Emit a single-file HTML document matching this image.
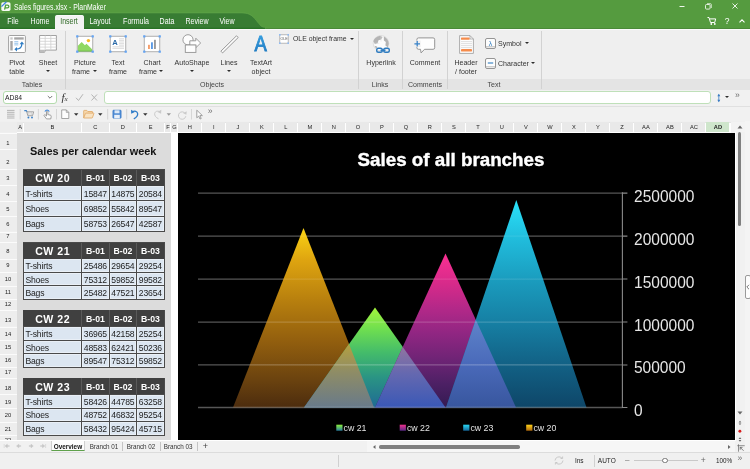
<!DOCTYPE html>
<html lang="en"><head><meta charset="utf-8"><title>Sales figures.xlsx - PlanMaker</title>
<style>
html,body{margin:0;padding:0}
body{width:750px;height:469px;overflow:hidden;position:relative;background:#f0f0f0;font-family:"Liberation Sans",sans-serif;}
#app{position:absolute;left:0;top:0;width:750px;height:469px;overflow:hidden}
#app div,#app svg,#app .t,#app i.dd{position:absolute}
.t{white-space:nowrap;line-height:1;display:block}
i.dd{width:0;height:0;border-left:2.500px solid transparent;border-right:2.500px solid transparent;border-top:2.800px solid #2c2c2c}
svg{overflow:visible}
</style></head><body><div id="app">
<div style="left:0px;top:0px;width:750px;height:28.8px;background:#559b3f"></div>
<svg style="left:0px;top:12px;" width="280" height="17" viewBox="0 12 280 17"><path d="M0 12.900H242C251 12.900 254 17.500 257.500 22S263.500 28.800 270 28.800H0z" fill="#387c33"/><path d="M0 12.900H242C251 12.900 254 17.500 257.500 22S263.500 28.500 269 28.600" fill="none" stroke="#63a84c" stroke-width="0.600"/><path d="M0 28.200H265" stroke="#226c20" stroke-width="1.100"/></svg>
<div style="left:266px;top:27.8px;width:484px;height:1px;background:#4a8a38"></div>
<div style="left:0px;top:28.8px;width:750px;height:0.9px;background:#fbfbfb"></div>
<svg style="left:1px;top:2px;" width="10" height="9" viewBox="0 0 10 9"><rect x="0.300" y="0.200" width="9.200" height="8.700" rx="1.600" fill="#f6faf3"/><path d="M3.600 7.600l1-4.400h1.900a1.300 1.300 0 0 1 0 2.700h-2.200" fill="none" stroke="#4ea23a" stroke-width="1.300"/><path d="M0.500 4.600L5.400 -0.200" stroke="#3f80e0" stroke-width="1.300"/></svg>
<span class="t" style="left:14.1px;text-align:left;top:3.8px;font-size:8.2px;color:#fff;font-weight:normal;transform:translateY(0px) scaleX(0.835);transform-origin:0 50%;">Sales figures.xlsx - PlanMaker</span>
<div style="left:55.2px;top:15.2px;width:28.6px;height:14.5px;background:#f3f3f3;border-radius:2.500px 2.500px 0 0;box-shadow:inset 0 0.600px 0 #fff"></div>
<span class="t" style="left:-107.2px;width:240px;text-align:center;top:18.2px;font-size:8.2px;color:#fff;font-weight:normal;transform:translateY(0px) scaleX(0.86);transform-origin:50% 50%;">File</span>
<span class="t" style="left:-80.4px;width:240px;text-align:center;top:18.2px;font-size:8.2px;color:#fff;font-weight:normal;transform:translateY(0px) scaleX(0.86);transform-origin:50% 50%;">Home</span>
<span class="t" style="left:-50.6px;width:240px;text-align:center;top:18.2px;font-size:8.2px;color:#2f6a26;font-weight:normal;transform:translateY(0px) scaleX(0.86);transform-origin:50% 50%;">Insert</span>
<span class="t" style="left:-19.8px;width:240px;text-align:center;top:18.2px;font-size:8.2px;color:#fff;font-weight:normal;transform:translateY(0px) scaleX(0.86);transform-origin:50% 50%;">Layout</span>
<span class="t" style="left:15.5px;width:240px;text-align:center;top:18.2px;font-size:8.2px;color:#fff;font-weight:normal;transform:translateY(0px) scaleX(0.86);transform-origin:50% 50%;">Formula</span>
<span class="t" style="left:47.0px;width:240px;text-align:center;top:18.2px;font-size:8.2px;color:#fff;font-weight:normal;transform:translateY(0px) scaleX(0.86);transform-origin:50% 50%;">Data</span>
<span class="t" style="left:76.7px;width:240px;text-align:center;top:18.2px;font-size:8.2px;color:#fff;font-weight:normal;transform:translateY(0px) scaleX(0.86);transform-origin:50% 50%;">Review</span>
<span class="t" style="left:106.5px;width:240px;text-align:center;top:18.2px;font-size:8.2px;color:#fff;font-weight:normal;transform:translateY(0px) scaleX(0.86);transform-origin:50% 50%;">View</span>
<svg style="left:676px;top:2px;" width="74" height="24" viewBox="0 0 74 24">
<path d="M3.5 4.5h5" stroke="#eef6eb" stroke-width="1"/>
<rect x="29.5" y="2.500" width="4.600" height="4.600" rx="1" fill="none" stroke="#eef6eb" stroke-width="0.900"/>
<path d="M31 1.700h3.500a0.800 0.800 0 0 1 0.800 0.800v3.500" fill="none" stroke="#eef6eb" stroke-width="0.800"/>
<path d="M56.5 1.500l5 5M61.500 1.500l-5 5" stroke="#eef6eb" stroke-width="0.950"/>
<path d="M31.5 15.5h1.5l1.5 5h4.2l1-3.6h-6" fill="none" stroke="#fff" stroke-width="1"/>
<circle cx="35.300" cy="22" r="0.9" fill="#fff"/><circle cx="38.800" cy="22" r="0.9" fill="#fff"/>
<path d="M63.500 20.300l2.500-2.500 2.500 2.500" fill="none" stroke="#fff" stroke-width="1.100"/>
</svg>
<span class="t" style="left:607.0px;width:240px;text-align:center;top:16.75px;font-size:8.5px;color:#fff;font-weight:normal;">?</span>
<div style="left:0px;top:29.7px;width:750px;height:60.3px;background:#efefef"></div>
<div style="left:0px;top:79px;width:750px;height:10.7px;background:#e4e4e4"></div>
<div style="left:0px;top:89.7px;width:750px;height:0.8px;background:#dcdcdc"></div>
<div style="left:65.3px;top:31px;width:1px;height:58px;background:#d2d2d2"></div>
<div style="left:358.3px;top:31px;width:1px;height:58px;background:#d2d2d2"></div>
<div style="left:402.1px;top:31px;width:1px;height:58px;background:#d2d2d2"></div>
<div style="left:447px;top:31px;width:1px;height:58px;background:#d2d2d2"></div>
<div style="left:540.7px;top:31px;width:1px;height:58px;background:#d2d2d2"></div>
<span class="t" style="left:-103.0px;width:240px;text-align:center;top:58.9px;font-size:8.0px;color:#333;font-weight:normal;transform:translateY(-0.45px) scaleX(0.88);transform-origin:50% 50%;">Pivot</span>
<span class="t" style="left:-103.0px;width:240px;text-align:center;top:68.4px;font-size:8.0px;color:#333;font-weight:normal;transform:translateY(-0.45px) scaleX(0.88);transform-origin:50% 50%;">table</span>
<span class="t" style="left:-72.5px;width:240px;text-align:center;top:58.9px;font-size:8.0px;color:#333;font-weight:normal;transform:translateY(-0.45px) scaleX(0.88);transform-origin:50% 50%;">Sheet</span>
<i class="dd" style="left:45.5px;top:70px"></i>
<span class="t" style="left:-34.7px;width:240px;text-align:center;top:58.9px;font-size:8.0px;color:#333;font-weight:normal;transform:translateY(-0.45px) scaleX(0.88);transform-origin:50% 50%;">Picture</span>
<span class="t" style="left:-38.7px;width:240px;text-align:center;top:68.4px;font-size:8.0px;color:#333;font-weight:normal;transform:translateY(-0.45px) scaleX(0.88);transform-origin:50% 50%;">frame</span>
<i class="dd" style="left:92.5px;top:70.0px"></i>
<span class="t" style="left:-1.7px;width:240px;text-align:center;top:58.9px;font-size:8.0px;color:#333;font-weight:normal;transform:translateY(-0.45px) scaleX(0.88);transform-origin:50% 50%;">Text</span>
<span class="t" style="left:-1.7px;width:240px;text-align:center;top:68.4px;font-size:8.0px;color:#333;font-weight:normal;transform:translateY(-0.45px) scaleX(0.88);transform-origin:50% 50%;">frame</span>
<span class="t" style="left:31.8px;width:240px;text-align:center;top:58.9px;font-size:8.0px;color:#333;font-weight:normal;transform:translateY(-0.45px) scaleX(0.88);transform-origin:50% 50%;">Chart</span>
<span class="t" style="left:27.8px;width:240px;text-align:center;top:68.4px;font-size:8.0px;color:#333;font-weight:normal;transform:translateY(-0.45px) scaleX(0.88);transform-origin:50% 50%;">frame</span>
<i class="dd" style="left:159.0px;top:70.0px"></i>
<span class="t" style="left:71.5px;width:240px;text-align:center;top:58.9px;font-size:8.0px;color:#333;font-weight:normal;transform:translateY(-0.45px) scaleX(0.88);transform-origin:50% 50%;">AutoShape</span>
<i class="dd" style="left:189.5px;top:70px"></i>
<span class="t" style="left:109.0px;width:240px;text-align:center;top:58.9px;font-size:8.0px;color:#333;font-weight:normal;transform:translateY(-0.45px) scaleX(0.88);transform-origin:50% 50%;">Lines</span>
<i class="dd" style="left:227px;top:70px"></i>
<span class="t" style="left:140.8px;width:240px;text-align:center;top:58.9px;font-size:8.0px;color:#333;font-weight:normal;transform:translateY(-0.45px) scaleX(0.88);transform-origin:50% 50%;">TextArt</span>
<span class="t" style="left:140.8px;width:240px;text-align:center;top:68.4px;font-size:8.0px;color:#333;font-weight:normal;transform:translateY(-0.45px) scaleX(0.88);transform-origin:50% 50%;">object</span>
<span class="t" style="left:260.8px;width:240px;text-align:center;top:58.9px;font-size:8.0px;color:#333;font-weight:normal;transform:translateY(-0.45px) scaleX(0.88);transform-origin:50% 50%;">Hyperlink</span>
<span class="t" style="left:304.6px;width:240px;text-align:center;top:58.9px;font-size:8.0px;color:#333;font-weight:normal;transform:translateY(-0.45px) scaleX(0.88);transform-origin:50% 50%;">Comment</span>
<span class="t" style="left:346.0px;width:240px;text-align:center;top:58.9px;font-size:8.0px;color:#333;font-weight:normal;transform:translateY(-0.45px) scaleX(0.88);transform-origin:50% 50%;">Header</span>
<span class="t" style="left:346.0px;width:240px;text-align:center;top:68.4px;font-size:8.0px;color:#333;font-weight:normal;transform:translateY(-0.45px) scaleX(0.88);transform-origin:50% 50%;">/ footer</span>
<span class="t" style="left:-88.0px;width:240px;text-align:center;top:80.6px;font-size:8.0px;color:#444;font-weight:normal;transform:translateY(-0.45px) scaleX(0.88);transform-origin:50% 50%;">Tables</span>
<span class="t" style="left:92.0px;width:240px;text-align:center;top:80.6px;font-size:8.0px;color:#444;font-weight:normal;transform:translateY(-0.45px) scaleX(0.88);transform-origin:50% 50%;">Objects</span>
<span class="t" style="left:260.0px;width:240px;text-align:center;top:80.6px;font-size:8.0px;color:#444;font-weight:normal;transform:translateY(-0.45px) scaleX(0.88);transform-origin:50% 50%;">Links</span>
<span class="t" style="left:304.6px;width:240px;text-align:center;top:80.6px;font-size:8.0px;color:#444;font-weight:normal;transform:translateY(-0.45px) scaleX(0.88);transform-origin:50% 50%;">Comments</span>
<span class="t" style="left:374.0px;width:240px;text-align:center;top:80.6px;font-size:8.0px;color:#444;font-weight:normal;transform:translateY(-0.45px) scaleX(0.88);transform-origin:50% 50%;">Text</span>
<span class="t" style="left:292.5px;text-align:left;top:35.0px;font-size:8.0px;color:#333;font-weight:normal;transform:translateY(0px) scaleX(0.86);transform-origin:0 50%;">OLE object frame</span>
<i class="dd" style="left:350px;top:37.700px"></i>
<span class="t" style="left:497.8px;text-align:left;top:39.8px;font-size:8.0px;color:#333;font-weight:normal;transform:translateY(0px) scaleX(0.88);transform-origin:0 50%;">Symbol</span>
<i class="dd" style="left:525.1px;top:41.900px"></i>
<span class="t" style="left:497.8px;text-align:left;top:59.7px;font-size:8.0px;color:#333;font-weight:normal;transform:translateY(0px) scaleX(0.88);transform-origin:0 50%;">Character</span>
<i class="dd" style="left:531.1px;top:61.900px"></i>
<!-- Pivot table -->
<svg style="left:8px;top:35px" width="18" height="18" viewBox="0 0 18 18">
<rect x="0.600" y="0.500" width="16.800" height="17" rx="1" fill="#fff" stroke="#979797" stroke-width="0.900"/>
<rect x="2.300" y="2.300" width="2.400" height="2.300" fill="#c9c9c9"/>
<rect x="6.200" y="2.300" width="9.500" height="2.300" fill="#a6a6a6"/>
<rect x="2.300" y="6" width="2.400" height="9.500" fill="#a6a6a6"/>
<path d="M6.300 6.700h4M6.300 8.300h4M6.300 9.900h4" stroke="#8fbde8" stroke-width="0.900"/>
<path d="M8.200 14.200c4 0 5.700-1.600 5.700-5.600" fill="none" stroke="#2d7cc4" stroke-width="1.250"/>
<path d="M11.600 9.200l2.300-2.600 2.300 2.600z" fill="#2d7cc4"/>
<path d="M9 12l-2.600 2.200 2.600 2.200z" fill="#2d7cc4"/>
</svg>
<!-- Sheet -->
<svg style="left:39px;top:35px" width="18" height="18" viewBox="0 0 18 18">
<path d="M0.600 0.500h16.800v14.600h-10.800l-1.200 2.300h-4.800z" fill="#fff" stroke="#979797" stroke-width="0.900"/>
<path d="M0.600 14.700h5.600l-1 2.700h-4.600z" fill="#bdbdbd"/>
<path d="M0.600 3.400h16.800M0.600 6.300h16.800M0.600 9.200h16.800M0.600 12.100h16.800" stroke="#d0d0d0" stroke-width="0.800"/>
<path d="M6.200 0.500v14.600M11.800 0.500v14.600" stroke="#d0d0d0" stroke-width="0.800"/>
</svg>
<!-- Picture frame -->
<svg style="left:76px;top:34.800px" width="18" height="18" viewBox="0 0 18 18">
<rect x="1.300" y="1.300" width="15.400" height="15.400" fill="#fff" stroke="#b4b4b4" stroke-width="1.100"/>
<circle cx="12.400" cy="5.600" r="1.700" fill="#f7b928"/>
<path d="M1.900 16.100v-5.300l3.800-3.900 3.200 3.300 1.600-1.500 5.600 5.600v1.800z" fill="#8fd862"/>
<path d="M1.900 15.700h14.200v0.900h-14.200z" fill="#6cb64a"/>
<g fill="#63a4f4"><rect x="0.150" y="0.150" width="2.300" height="2.300" rx="0.500"/><rect x="15.550" y="0.150" width="2.300" height="2.300" rx="0.500"/><rect x="0.150" y="15.550" width="2.300" height="2.300" rx="0.500"/><rect x="15.550" y="15.550" width="2.300" height="2.300" rx="0.500"/></g>
</svg>
<!-- Text frame -->
<svg style="left:109.400px;top:34.800px" width="18" height="18" viewBox="0 0 18 18">
<rect x="1.300" y="1.300" width="15.400" height="15.400" fill="#fff" stroke="#b4b4b4" stroke-width="1.100"/>
<path d="M10 3.800h5M10 5.400h5M10 7h5M10 8.600h5M10 10.200h5M3.500 11.800h11.500M3.500 13.400h11.500" stroke="#d4d4d4" stroke-width="0.800"/>
<text x="6" y="9.800" text-anchor="middle" font-family="'Liberation Sans',sans-serif" font-weight="bold" font-size="7.600" fill="#2a6aa8">A</text>
<g fill="#63a4f4"><rect x="0.150" y="0.150" width="2.300" height="2.300" rx="0.500"/><rect x="15.550" y="0.150" width="2.300" height="2.300" rx="0.500"/><rect x="0.150" y="15.550" width="2.300" height="2.300" rx="0.500"/><rect x="15.550" y="15.550" width="2.300" height="2.300" rx="0.500"/></g>
</svg>
<!-- Chart frame -->
<svg style="left:142.800px;top:35px" width="18" height="18" viewBox="0 0 18 18">
<rect x="1.300" y="1.300" width="15.400" height="15.400" fill="#fff" stroke="#b4b4b4" stroke-width="1.100"/>
<rect x="5.100" y="9.800" width="1.700" height="4.200" fill="#f4935a"/>
<rect x="8.100" y="7.300" width="1.700" height="6.700" fill="#4a90e2"/>
<rect x="11.100" y="4.800" width="1.700" height="9.200" fill="#8f8f8f"/>
<g fill="#63a4f4"><rect x="0.150" y="0.150" width="2.300" height="2.300" rx="0.500"/><rect x="15.550" y="0.150" width="2.300" height="2.300" rx="0.500"/><rect x="0.150" y="15.550" width="2.300" height="2.300" rx="0.500"/><rect x="15.550" y="15.550" width="2.300" height="2.300" rx="0.500"/></g>
</svg>
<!-- AutoShape -->
<svg style="left:181px;top:34px" width="21" height="19" viewBox="0 0 21 19">
<circle cx="7" cy="5.800" r="5.100" fill="#fdfdfd" stroke="#939393" stroke-width="0.900"/>
<path d="M8.800 6.800h6v-2.600l4.800 4.800-4.800 4.800v-2.600h-6z" fill="#fdfdfd" stroke="#939393" stroke-width="0.900" stroke-linejoin="round"/>
<rect x="4.300" y="11" width="10.600" height="7.400" fill="#fdfdfd" stroke="#939393" stroke-width="0.900"/>
</svg>
<!-- Lines -->
<svg style="left:219.500px;top:34.500px" width="19" height="19" viewBox="0 0 19 19">
<path d="M0.900 16.200l15.600-15.400 1.700 1.700-15.600 15.400z" fill="#fdfdfd" stroke="#8a8a8a" stroke-width="0.900" stroke-linejoin="round"/>
</svg>
<!-- TextArt -->
<svg style="left:252px;top:33px" width="18" height="20" viewBox="0 0 18 20">
<defs><linearGradient id="ta" x1="0" y1="0" x2="0" y2="1"><stop offset="0" stop-color="#39a4e4"/><stop offset="1" stop-color="#1c74bc"/></linearGradient></defs>
<text x="8.700" y="17.800" text-anchor="middle" font-family="'Liberation Sans',sans-serif" font-weight="normal" font-size="21.500" fill="url(#ta)" stroke="url(#ta)" stroke-width="0.900" textLength="12.300" lengthAdjust="spacingAndGlyphs">A</text>
</svg>
<!-- OLE -->
<svg style="left:279.300px;top:33.800px" width="10" height="10" viewBox="0 0 10 10">
<rect x="0.800" y="0.800" width="8.400" height="8.400" fill="#fff" stroke="#a8a8a8" stroke-width="0.800"/>
<text x="5" y="6.300" text-anchor="middle" font-family="'Liberation Sans',sans-serif" font-size="3.600" fill="#555">OLE</text>
<g fill="#8fbcf6"><rect x="0" y="0" width="1.600" height="1.600"/><rect x="8.400" y="0" width="1.600" height="1.600"/><rect x="0" y="8.400" width="1.600" height="1.600"/><rect x="8.400" y="8.400" width="1.600" height="1.600"/></g>
</svg>
<!-- Hyperlink -->
<svg style="left:371.500px;top:34.500px" width="19" height="19" viewBox="0 0 19 19">
<circle cx="9" cy="8.300" r="7.800" fill="#fcfcfc" stroke="#d6d6d6" stroke-width="0.700"/>
<path d="M1.400 6.300C2 3.500 4.500 1.200 8 0.700l2.600 1.300-1.500 2.600-2.600 0.600-0.900 3-2.700 1.100zM11.800 1.600c3.200 1.300 4.900 4 5 7.200l-1 3.400-2.400-1.600 0.400-3.600-1.900-1.500zM2.400 10.700l2.700 0.700 0.300 2.200-1.700-0.300z" fill="#b4b4b4"/>
<path d="M9 0.500v6M1.200 8.300h6" stroke="#dcdcdc" stroke-width="0.500"/>
<rect x="4.700" y="13.300" width="5.600" height="4" rx="1.800" fill="none" stroke="#2f7cc0" stroke-width="1.400"/>
<rect x="11.700" y="13.300" width="5.600" height="4" rx="1.800" fill="none" stroke="#2f7cc0" stroke-width="1.400"/>
<path d="M8.500 15.300h5" stroke="#2f7cc0" stroke-width="1.400"/>
</svg>
<!-- Comment -->
<svg style="left:413px;top:36.500px" width="23" height="17" viewBox="0 0 23 17">
<path d="M5.500 0.900h14.600a1.600 1.600 0 0 1 1.600 1.600v8.200a1.600 1.600 0 0 1-1.600 1.600h-8.600l-3.400 3.600-0.600-3.600h-2a1.600 1.600 0 0 1-1.600-1.600v-8.200a1.600 1.600 0 0 1 1.600-1.600z" fill="#fdfdfd" stroke="#8a8a8a" stroke-width="0.900" stroke-linejoin="round"/>
<rect x="0.800" y="3.600" width="6.800" height="6.400" fill="#efefef"/>
<path d="M4.200 4v5.600M1.400 6.800h5.600" stroke="#3a83c8" stroke-width="1.300"/>
</svg>
<!-- Header / footer -->
<svg style="left:459px;top:34.500px" width="15" height="19" viewBox="0 0 15 19">
<path d="M0.600 0.600h10.400l3.400 3.400v14.400h-13.800z" fill="#fdfdfd" stroke="#a4a4a4" stroke-width="0.900" stroke-linejoin="round"/>
<path d="M11 0.600v3.400h3.400" fill="none" stroke="#a4a4a4" stroke-width="0.800"/>
<rect x="2" y="2.500" width="8.600" height="2.300" rx="0.400" fill="#f58c4c"/>
<rect x="2" y="14.100" width="11" height="2.300" rx="0.400" fill="#f58c4c"/>
<path d="M2 6.600h11M2 8.600h11M2 10.600h11M2 12.600h11" stroke="#d6d6d6" stroke-width="0.800"/>
</svg>
<!-- Symbol -->
<svg style="left:484.500px;top:38px" width="11" height="11" viewBox="0 0 11 11">
<rect x="0.500" y="0.500" width="10" height="10" rx="1.500" fill="#fdfdfd" stroke="#8a8a8a" stroke-width="0.900"/>
<path d="M1 8.800h9" stroke="#b8b8b8" stroke-width="1"/>
<text x="5.500" y="7.600" text-anchor="middle" font-family="'Liberation Sans',sans-serif" font-size="7" fill="#2f7cc0">λ</text>
</svg>
<!-- Character -->
<svg style="left:484.500px;top:57.800px" width="11" height="11" viewBox="0 0 11 11">
<rect x="0.500" y="0.500" width="10" height="10" rx="1.500" fill="#fdfdfd" stroke="#8a8a8a" stroke-width="0.900"/>
<path d="M1 8.800h9" stroke="#b8b8b8" stroke-width="1"/>
<path d="M2.800 5h5.400" stroke="#2f7cc0" stroke-width="1.100"/>
</svg>

<div style="left:0px;top:90px;width:750px;height:31px;background:#f1f1f1"></div>
<div style="left:0px;top:105.5px;width:750px;height:1px;background:#e0e0e0"></div>
<div style="left:2.5px;top:91.1px;width:54px;height:12.7px;background:#fff;border:1px solid #b4dbad;border-radius:3px;box-sizing:border-box"></div>
<span class="t" style="left:5.2px;text-align:left;top:94.05px;font-size:7.9px;color:#222;font-weight:normal;transform:translateY(0px) scaleX(0.86);transform-origin:0 50%;">AD84</span>
<svg style="left:47px;top:95px;" width="6" height="5" viewBox="0 0 6 5"><path d="M0.800 1l2.200 2.200L5.200 1" fill="none" stroke="#666" stroke-width="0.900"/></svg>
<span class="t" style="left:-55.5px;width:240px;text-align:center;top:91.8px;font-size:11px;color:#333;font-weight:normal;font-family:'Liberation Serif',serif;"><i>f</i><span style="font-size:7px;font-style:italic">x</span></span>
<svg style="left:75px;top:93px;" width="24" height="9" viewBox="0 0 24 9"><path d="M1 4.800l2.500 2.700L8 1.200" fill="none" stroke="#b4b4b4" stroke-width="1"/><path d="M16.500 1.500l5.500 6M22 1.500l-5.500 6" stroke="#b4b4b4" stroke-width="1"/></svg>
<div style="left:104px;top:91.1px;width:606.8px;height:12.7px;background:#fff;border:1px solid #bfe0b9;border-radius:3px;box-sizing:border-box"></div>
<svg style="left:715px;top:93px;" width="8" height="10" viewBox="0 0 8 10"><path d="M3.800 1.500v7" stroke="#3a7cc4" stroke-width="0.800"/><path d="M2.300 3.200L3.800 0.800l1.500 2.400zM2.300 6.800L3.800 9.200l1.500-2.400z" fill="#3a7cc4"/></svg>
<i class="dd" style="left:725.4px;top:96.000px"></i>
<span class="t" style="left:617.4px;width:240px;text-align:center;top:90.65px;font-size:8.5px;color:#6e6e6e;font-weight:normal;">»</span>
<!-- toolbar row -->
<svg style="left:0px;top:106px" width="220" height="15" viewBox="0 106 220 15">
<!-- grip -->
<path d="M7 110.400h7.500M7 112.300h7.500M7 114.200h7.500M7 116.100h7.500M7 118h7.500" stroke="#b4b4b4" stroke-width="1"/>
<g stroke="#d2d2d2" stroke-width="0.900"><path d="M20.200 109v10.500M38.400 109v10.500M56.500 109v10.500M107.700 109v10.500M126.700 109v10.500M191.500 109v10.500"/></g>
<!-- cart -->
<path d="M24.300 110.600h1.900l1 1.400" fill="none" stroke="#3a80c6" stroke-width="1.200"/>
<path d="M26.800 111.800h6.900l-1.200 3.900h-4.700z" fill="#f4f4f4" stroke="#8f8f8f" stroke-width="0.800" stroke-linejoin="round"/>
<path d="M28.300 112v3.500M30 112v3.500M31.600 112v3.500" stroke="#b8b8b8" stroke-width="0.500"/>
<circle cx="28.400" cy="117.500" r="0.950" fill="#3a80c6"/><circle cx="32" cy="117.500" r="0.950" fill="#3a80c6"/>
<!-- hand -->
<path d="M44.900 111.600a2.400 2.400 0 0 1 4.400 0" fill="none" stroke="#4a90e2" stroke-width="1.100"/>
<path d="M46.500 116v-4.300a0.700 0.700 0 0 1 1.400 0v3h0.500l2 0.500a1 1 0 0 1 0.800 1.100l-0.400 2.600h-4.300l-2.400-3.200a0.700 0.700 0 0 1 1.100-0.800z" fill="#fdfdfd" stroke="#8a8a8a" stroke-width="0.800" stroke-linejoin="round"/>
<!-- new -->
<path d="M61.700 109.900h4.600l2.500 2.500v6.100h-7.100z" fill="#fdfdfd" stroke="#8f8f8f" stroke-width="0.800" stroke-linejoin="round"/>
<path d="M66.300 109.900v2.500h2.500" fill="none" stroke="#8f8f8f" stroke-width="0.700"/>
<path d="M74 113.200h4.400l-2.200 2.500z" fill="#333"/>
<!-- folder -->
<path d="M83.700 117.900v-7a0.500 0.500 0 0 1 0.500-0.500h2.600l1 1.100h4.300a0.500 0.500 0 0 1 0.500 0.500v1.200" fill="#f6d9ae" stroke="#dfa662" stroke-width="0.800" stroke-linejoin="round"/>
<path d="M83.700 118l1.700-4.500a0.600 0.600 0 0 1 0.500-0.400h7.600a0.400 0.400 0 0 1 0.400 0.500l-1.500 4.100a0.500 0.500 0 0 1-0.500 0.300z" fill="#f9e3c2" stroke="#dfa662" stroke-width="0.800" stroke-linejoin="round"/>
<path d="M98.100 113.200h4.400l-2.200 2.500z" fill="#333"/>
<!-- save -->
<rect x="112.800" y="110.100" width="8.400" height="8.200" rx="0.800" fill="#4a89d3" stroke="#3c78c2" stroke-width="0.500"/>
<rect x="114.500" y="110.300" width="5" height="3" fill="#dbe8f7"/>
<rect x="114.200" y="114.800" width="5.600" height="3.500" fill="#e8f0fa"/>
<!-- undo -->
<path d="M133.800 118.800c2.800-1.400 4.200-3.300 3.800-5.400-0.400-2-2.800-3-5.400-1.500" fill="none" stroke="#2f7cc8" stroke-width="1.300"/>
<path d="M131 109.800l0.200 4 3.600-1.700z" fill="#2f7cc8"/>
<path d="M143.100 113.200h4.400l-2.200 2.500z" fill="#333"/>
<!-- redo (disabled) -->
<path d="M158.500 118.800c-2.800-1.400-4.200-3.300-3.800-5.400 0.400-2 2.800-3 5.400-1.500" fill="none" stroke="#cacaca" stroke-width="1"/>
<path d="M161.300 109.800l-0.200 4-3.600-1.700z" fill="#cacaca"/>
<path d="M166.600 113.200h4.400l-2.200 2.500z" fill="#9a9a9a"/>
<!-- repeat (disabled) -->
<path d="M185.300 113.600a3.700 3.700 0 1 0 0.500 2.600" fill="none" stroke="#cacaca" stroke-width="1"/>
<path d="M186.700 111.200l-0.300 3.500-3.200-1.400z" fill="#cacaca"/>
<!-- cursor -->
<path d="M196.800 110.200v7.600l1.900-1.700 1.300 2.900 1.200-0.500-1.300-2.900h2.500z" fill="#fdfdfd" stroke="#8a8a8a" stroke-width="0.800" stroke-linejoin="round"/>
</svg>
<span class="t" style="left:207.800px;top:106.600px;font-size:8.500px;color:#6e6e6e">»</span>

<div style="left:0px;top:121.5px;width:750px;height:12px;background:#fff"></div>
<div style="left:0px;top:121.8px;width:750px;height:0.7px;background:#e4e4e4"></div>
<div style="left:0px;top:122.4px;width:16.5px;height:10.6px;background:#ededed;border-bottom:1px solid #fafafa;box-sizing:border-box"></div>
<div style="left:17.35px;top:122.4px;width:5.65px;height:9.3px;background:#e9e9e9"></div>
<span class="t" style="left:-99.85px;width:240px;text-align:center;top:124.65px;font-size:5.7px;color:#222;font-weight:normal;">A</span>
<div style="left:23.85px;top:122.4px;width:57.15px;height:9.3px;background:#e9e9e9"></div>
<span class="t" style="left:-67.6px;width:240px;text-align:center;top:124.65px;font-size:5.7px;color:#222;font-weight:normal;">B</span>
<div style="left:81.85px;top:122.4px;width:26.85px;height:9.3px;background:#e9e9e9"></div>
<span class="t" style="left:-24.75px;width:240px;text-align:center;top:124.65px;font-size:5.7px;color:#222;font-weight:normal;">C</span>
<div style="left:109.55px;top:122.4px;width:26.449999999999996px;height:9.3px;background:#e9e9e9"></div>
<span class="t" style="left:2.75px;width:240px;text-align:center;top:124.65px;font-size:5.7px;color:#222;font-weight:normal;">D</span>
<div style="left:136.85px;top:122.4px;width:27.65px;height:9.3px;background:#e9e9e9"></div>
<span class="t" style="left:30.65px;width:240px;text-align:center;top:124.65px;font-size:5.7px;color:#222;font-weight:normal;">E</span>
<div style="left:165.35px;top:122.4px;width:5.15px;height:9.3px;background:#e9e9e9"></div>
<span class="t" style="left:47.9px;width:240px;text-align:center;top:124.65px;font-size:5.7px;color:#222;font-weight:normal;">F</span>
<div style="left:171.35px;top:122.4px;width:6.15px;height:9.3px;background:#e9e9e9"></div>
<span class="t" style="left:54.4px;width:240px;text-align:center;top:124.65px;font-size:5.7px;color:#222;font-weight:normal;">G</span>
<div style="left:178.35px;top:122.4px;width:23.15px;height:9.3px;background:#e9e9e9"></div>
<span class="t" style="left:69.9px;width:240px;text-align:center;top:124.65px;font-size:5.7px;color:#222;font-weight:normal;">H</span>
<div style="left:202.35px;top:122.4px;width:23.15px;height:9.3px;background:#e9e9e9"></div>
<span class="t" style="left:93.9px;width:240px;text-align:center;top:124.65px;font-size:5.7px;color:#222;font-weight:normal;">I</span>
<div style="left:226.35px;top:122.4px;width:23.15px;height:9.3px;background:#e9e9e9"></div>
<span class="t" style="left:117.9px;width:240px;text-align:center;top:124.65px;font-size:5.7px;color:#222;font-weight:normal;">J</span>
<div style="left:250.35px;top:122.4px;width:23.15px;height:9.3px;background:#e9e9e9"></div>
<span class="t" style="left:141.9px;width:240px;text-align:center;top:124.65px;font-size:5.7px;color:#222;font-weight:normal;">K</span>
<div style="left:274.35px;top:122.4px;width:23.15px;height:9.3px;background:#e9e9e9"></div>
<span class="t" style="left:165.9px;width:240px;text-align:center;top:124.65px;font-size:5.7px;color:#222;font-weight:normal;">L</span>
<div style="left:298.35px;top:122.4px;width:23.15px;height:9.3px;background:#e9e9e9"></div>
<span class="t" style="left:189.9px;width:240px;text-align:center;top:124.65px;font-size:5.7px;color:#222;font-weight:normal;">M</span>
<div style="left:322.35px;top:122.4px;width:23.15px;height:9.3px;background:#e9e9e9"></div>
<span class="t" style="left:213.9px;width:240px;text-align:center;top:124.65px;font-size:5.7px;color:#222;font-weight:normal;">N</span>
<div style="left:346.35px;top:122.4px;width:23.15px;height:9.3px;background:#e9e9e9"></div>
<span class="t" style="left:237.9px;width:240px;text-align:center;top:124.65px;font-size:5.7px;color:#222;font-weight:normal;">O</span>
<div style="left:370.35px;top:122.4px;width:23.15px;height:9.3px;background:#e9e9e9"></div>
<span class="t" style="left:261.9px;width:240px;text-align:center;top:124.65px;font-size:5.7px;color:#222;font-weight:normal;">P</span>
<div style="left:394.35px;top:122.4px;width:23.15px;height:9.3px;background:#e9e9e9"></div>
<span class="t" style="left:285.9px;width:240px;text-align:center;top:124.65px;font-size:5.7px;color:#222;font-weight:normal;">Q</span>
<div style="left:418.35px;top:122.4px;width:23.15px;height:9.3px;background:#e9e9e9"></div>
<span class="t" style="left:309.9px;width:240px;text-align:center;top:124.65px;font-size:5.7px;color:#222;font-weight:normal;">R</span>
<div style="left:442.35px;top:122.4px;width:23.15px;height:9.3px;background:#e9e9e9"></div>
<span class="t" style="left:333.9px;width:240px;text-align:center;top:124.65px;font-size:5.7px;color:#222;font-weight:normal;">S</span>
<div style="left:466.35px;top:122.4px;width:23.15px;height:9.3px;background:#e9e9e9"></div>
<span class="t" style="left:357.9px;width:240px;text-align:center;top:124.65px;font-size:5.7px;color:#222;font-weight:normal;">T</span>
<div style="left:490.35px;top:122.4px;width:23.15px;height:9.3px;background:#e9e9e9"></div>
<span class="t" style="left:381.9px;width:240px;text-align:center;top:124.65px;font-size:5.7px;color:#222;font-weight:normal;">U</span>
<div style="left:514.35px;top:122.4px;width:23.15px;height:9.3px;background:#e9e9e9"></div>
<span class="t" style="left:405.9px;width:240px;text-align:center;top:124.65px;font-size:5.7px;color:#222;font-weight:normal;">V</span>
<div style="left:538.35px;top:122.4px;width:23.15px;height:9.3px;background:#e9e9e9"></div>
<span class="t" style="left:429.9px;width:240px;text-align:center;top:124.65px;font-size:5.7px;color:#222;font-weight:normal;">W</span>
<div style="left:562.35px;top:122.4px;width:23.15px;height:9.3px;background:#e9e9e9"></div>
<span class="t" style="left:453.9px;width:240px;text-align:center;top:124.65px;font-size:5.7px;color:#222;font-weight:normal;">X</span>
<div style="left:586.35px;top:122.4px;width:23.15px;height:9.3px;background:#e9e9e9"></div>
<span class="t" style="left:477.9px;width:240px;text-align:center;top:124.65px;font-size:5.7px;color:#222;font-weight:normal;">Y</span>
<div style="left:610.35px;top:122.4px;width:23.15px;height:9.3px;background:#e9e9e9"></div>
<span class="t" style="left:501.9px;width:240px;text-align:center;top:124.65px;font-size:5.7px;color:#222;font-weight:normal;">Z</span>
<div style="left:634.35px;top:122.4px;width:23.15px;height:9.3px;background:#e9e9e9"></div>
<span class="t" style="left:525.9px;width:240px;text-align:center;top:124.65px;font-size:5.7px;color:#222;font-weight:normal;">AA</span>
<div style="left:658.35px;top:122.4px;width:23.15px;height:9.3px;background:#e9e9e9"></div>
<span class="t" style="left:549.9px;width:240px;text-align:center;top:124.65px;font-size:5.7px;color:#222;font-weight:normal;">AB</span>
<div style="left:682.35px;top:122.4px;width:23.15px;height:9.3px;background:#e9e9e9"></div>
<span class="t" style="left:573.9px;width:240px;text-align:center;top:124.65px;font-size:5.7px;color:#222;font-weight:normal;">AC</span>
<div style="left:706.35px;top:122.4px;width:23.15px;height:9.3px;background:#cfe6cc"></div>
<span class="t" style="left:597.9px;width:240px;text-align:center;top:124.65px;font-size:5.7px;color:#222;font-weight:bold;">AD</span>
<div style="left:730.5px;top:121.5px;width:20px;height:12px;background:#f3f3f3"></div>
<div style="left:0px;top:132px;width:178px;height:308px;background:#fff"></div>
<div style="left:0px;top:132px;width:17px;height:308px;background:#efefef"></div>
<div style="left:17px;top:133.3px;width:154px;height:306.7px;background:#dcdcdc"></div>
<div style="left:0px;top:133px;width:16.5px;height:16px;border-top:1px solid #fbfbfb;box-sizing:border-box;background:#ededed"></div>
<span class="t" style="left:-112.1px;width:240px;text-align:center;top:140.7px;font-size:5.8px;color:#222;font-weight:normal;">1</span>
<div style="left:0px;top:149px;width:16.5px;height:20px;border-top:1px solid #fbfbfb;box-sizing:border-box;background:#ededed"></div>
<span class="t" style="left:-112.1px;width:240px;text-align:center;top:159.9px;font-size:5.8px;color:#222;font-weight:normal;">2</span>
<div style="left:0px;top:169px;width:16.5px;height:16px;border-top:1px solid #fbfbfb;box-sizing:border-box;background:#ededed"></div>
<span class="t" style="left:-112.1px;width:240px;text-align:center;top:176.3px;font-size:5.8px;color:#222;font-weight:normal;">3</span>
<div style="left:0px;top:185px;width:16.5px;height:15.800000000000011px;border-top:1px solid #fbfbfb;box-sizing:border-box;background:#ededed"></div>
<span class="t" style="left:-112.1px;width:240px;text-align:center;top:192.3px;font-size:5.8px;color:#222;font-weight:normal;">4</span>
<div style="left:0px;top:200.8px;width:16.5px;height:15.399999999999977px;border-top:1px solid #fbfbfb;box-sizing:border-box;background:#ededed"></div>
<span class="t" style="left:-112.1px;width:240px;text-align:center;top:207.2px;font-size:5.8px;color:#222;font-weight:normal;">5</span>
<div style="left:0px;top:216.2px;width:16.5px;height:15.300000000000011px;border-top:1px solid #fbfbfb;box-sizing:border-box;background:#ededed"></div>
<span class="t" style="left:-112.1px;width:240px;text-align:center;top:222.1px;font-size:5.8px;color:#222;font-weight:normal;">6</span>
<div style="left:0px;top:231.5px;width:16.5px;height:10.5px;border-top:1px solid #fbfbfb;box-sizing:border-box;background:#ededed"></div>
<span class="t" style="left:-112.1px;width:240px;text-align:center;top:234.3px;font-size:5.8px;color:#222;font-weight:normal;">7</span>
<div style="left:0px;top:242px;width:16.5px;height:16.600000000000023px;border-top:1px solid #fbfbfb;box-sizing:border-box;background:#ededed"></div>
<span class="t" style="left:-112.1px;width:240px;text-align:center;top:249.4px;font-size:5.8px;color:#222;font-weight:normal;">8</span>
<div style="left:0px;top:258.6px;width:16.5px;height:13.799999999999955px;border-top:1px solid #fbfbfb;box-sizing:border-box;background:#ededed"></div>
<span class="t" style="left:-112.1px;width:240px;text-align:center;top:263.4px;font-size:5.8px;color:#222;font-weight:normal;">9</span>
<div style="left:0px;top:272.4px;width:16.5px;height:13.200000000000045px;border-top:1px solid #fbfbfb;box-sizing:border-box;background:#ededed"></div>
<span class="t" style="left:-112.1px;width:240px;text-align:center;top:276.6px;font-size:5.8px;color:#222;font-weight:normal;">10</span>
<div style="left:0px;top:285.6px;width:16.5px;height:13.699999999999989px;border-top:1px solid #fbfbfb;box-sizing:border-box;background:#ededed"></div>
<span class="t" style="left:-112.1px;width:240px;text-align:center;top:290.0px;font-size:5.8px;color:#222;font-weight:normal;">11</span>
<div style="left:0px;top:299.3px;width:16.5px;height:10.899999999999977px;border-top:1px solid #fbfbfb;box-sizing:border-box;background:#ededed"></div>
<span class="t" style="left:-112.1px;width:240px;text-align:center;top:301.7px;font-size:5.8px;color:#222;font-weight:normal;">12</span>
<div style="left:0px;top:310.2px;width:16.5px;height:16.30000000000001px;border-top:1px solid #fbfbfb;box-sizing:border-box;background:#ededed"></div>
<span class="t" style="left:-112.1px;width:240px;text-align:center;top:317.9px;font-size:5.8px;color:#222;font-weight:normal;">13</span>
<div style="left:0px;top:326.5px;width:16.5px;height:13.699999999999989px;border-top:1px solid #fbfbfb;box-sizing:border-box;background:#ededed"></div>
<span class="t" style="left:-112.1px;width:240px;text-align:center;top:331.7px;font-size:5.8px;color:#222;font-weight:normal;">14</span>
<div style="left:0px;top:340.2px;width:16.5px;height:13.600000000000023px;border-top:1px solid #fbfbfb;box-sizing:border-box;background:#ededed"></div>
<span class="t" style="left:-112.1px;width:240px;text-align:center;top:344.7px;font-size:5.8px;color:#222;font-weight:normal;">15</span>
<div style="left:0px;top:353.8px;width:16.5px;height:13.599999999999966px;border-top:1px solid #fbfbfb;box-sizing:border-box;background:#ededed"></div>
<span class="t" style="left:-112.1px;width:240px;text-align:center;top:358.1px;font-size:5.8px;color:#222;font-weight:normal;">16</span>
<div style="left:0px;top:367.4px;width:16.5px;height:10.600000000000023px;border-top:1px solid #fbfbfb;box-sizing:border-box;background:#ededed"></div>
<span class="t" style="left:-112.1px;width:240px;text-align:center;top:369.9px;font-size:5.8px;color:#222;font-weight:normal;">17</span>
<div style="left:0px;top:378px;width:16.5px;height:16.399999999999977px;border-top:1px solid #fbfbfb;box-sizing:border-box;background:#ededed"></div>
<span class="t" style="left:-112.1px;width:240px;text-align:center;top:385.8px;font-size:5.8px;color:#222;font-weight:normal;">18</span>
<div style="left:0px;top:394.4px;width:16.5px;height:13.800000000000011px;border-top:1px solid #fbfbfb;box-sizing:border-box;background:#ededed"></div>
<span class="t" style="left:-112.1px;width:240px;text-align:center;top:399.5px;font-size:5.8px;color:#222;font-weight:normal;">19</span>
<div style="left:0px;top:408.2px;width:16.5px;height:13.5px;border-top:1px solid #fbfbfb;box-sizing:border-box;background:#ededed"></div>
<span class="t" style="left:-112.1px;width:240px;text-align:center;top:413.1px;font-size:5.8px;color:#222;font-weight:normal;">20</span>
<div style="left:0px;top:421.7px;width:16.5px;height:13.5px;border-top:1px solid #fbfbfb;box-sizing:border-box;background:#ededed"></div>
<span class="t" style="left:-112.1px;width:240px;text-align:center;top:426.8px;font-size:5.8px;color:#222;font-weight:normal;">21</span>
<div style="left:0px;top:435.2px;width:16.5px;height:4.800000000000011px;border-top:1px solid #fbfbfb;box-sizing:border-box;background:#ededed"></div>
<span class="t" style="left:-112.1px;width:240px;text-align:center;top:438.2px;font-size:5.8px;color:#222;font-weight:normal;">22</span>
<span class="t" style="left:-26.8px;width:240px;text-align:center;top:145.72px;font-size:10.95px;color:#111;font-weight:bold;">Sales per calendar week</span>
<div style="left:22.8px;top:169.0px;width:142.0px;height:63.0px;background:#4a4a4a"></div>
<div style="left:23.3px;top:169.5px;width:141.0px;height:16.0px;background:#404040"></div>
<div style="left:81.0px;top:169.5px;width:1px;height:16.0px;background:#5a5a5a"></div>
<div style="left:108.8px;top:169.5px;width:1px;height:16.0px;background:#5a5a5a"></div>
<div style="left:136.2px;top:169.5px;width:1px;height:16.0px;background:#5a5a5a"></div>
<span class="t" style="left:-67.3px;width:240px;text-align:center;top:173.3px;font-size:10.6px;color:#fff;font-weight:bold;letter-spacing:0.55px;">CW 20</span>
<span class="t" style="left:-24.6px;width:240px;text-align:center;top:174.25px;font-size:8.7px;color:#fff;font-weight:bold;">B-01</span>
<span class="t" style="left:3.0px;width:240px;text-align:center;top:174.25px;font-size:8.7px;color:#fff;font-weight:bold;">B-02</span>
<span class="t" style="left:30.5px;width:240px;text-align:center;top:174.25px;font-size:8.7px;color:#fff;font-weight:bold;">B-03</span>
<div style="left:23.8px;top:186.0px;width:57.2px;height:14.300000000000011px;background:#dce6f1;box-shadow:inset 0 0 0 0.700px #edf2f8"></div>
<div style="left:82.0px;top:186.0px;width:26.799999999999997px;height:14.300000000000011px;background:#dce6f1;box-shadow:inset 0 0 0 0.700px #edf2f8"></div>
<div style="left:109.8px;top:186.0px;width:26.39999999999999px;height:14.300000000000011px;background:#dce6f1;box-shadow:inset 0 0 0 0.700px #edf2f8"></div>
<div style="left:137.2px;top:186.0px;width:26.600000000000023px;height:14.300000000000011px;background:#dce6f1;box-shadow:inset 0 0 0 0.700px #edf2f8"></div>
<span class="t" style="left:25.400000000000002px;text-align:left;top:189.65px;font-size:8.6px;color:#222;font-weight:normal;letter-spacing:-0.15px;">T-shirts</span>
<span class="t" style="left:-133.0px;width:240px;text-align:right;top:189.65px;font-size:8.6px;color:#222;font-weight:normal;letter-spacing:-0.15px;">15847</span>
<span class="t" style="left:-105.6px;width:240px;text-align:right;top:189.65px;font-size:8.6px;color:#222;font-weight:normal;letter-spacing:-0.15px;">14875</span>
<span class="t" style="left:-78.0px;width:240px;text-align:right;top:189.65px;font-size:8.6px;color:#222;font-weight:normal;letter-spacing:-0.15px;">20584</span>
<div style="left:23.8px;top:201.3px;width:57.2px;height:14.399999999999977px;background:#dce6f1;box-shadow:inset 0 0 0 0.700px #edf2f8"></div>
<div style="left:82.0px;top:201.3px;width:26.799999999999997px;height:14.399999999999977px;background:#dce6f1;box-shadow:inset 0 0 0 0.700px #edf2f8"></div>
<div style="left:109.8px;top:201.3px;width:26.39999999999999px;height:14.399999999999977px;background:#dce6f1;box-shadow:inset 0 0 0 0.700px #edf2f8"></div>
<div style="left:137.2px;top:201.3px;width:26.600000000000023px;height:14.399999999999977px;background:#dce6f1;box-shadow:inset 0 0 0 0.700px #edf2f8"></div>
<span class="t" style="left:25.400000000000002px;text-align:left;top:205.0px;font-size:8.6px;color:#222;font-weight:normal;letter-spacing:-0.15px;">Shoes</span>
<span class="t" style="left:-133.0px;width:240px;text-align:right;top:205.0px;font-size:8.6px;color:#222;font-weight:normal;letter-spacing:-0.15px;">69852</span>
<span class="t" style="left:-105.6px;width:240px;text-align:right;top:205.0px;font-size:8.6px;color:#222;font-weight:normal;letter-spacing:-0.15px;">55842</span>
<span class="t" style="left:-78.0px;width:240px;text-align:right;top:205.0px;font-size:8.6px;color:#222;font-weight:normal;letter-spacing:-0.15px;">89547</span>
<div style="left:23.8px;top:216.7px;width:57.2px;height:14.300000000000011px;background:#dce6f1;box-shadow:inset 0 0 0 0.700px #edf2f8"></div>
<div style="left:82.0px;top:216.7px;width:26.799999999999997px;height:14.300000000000011px;background:#dce6f1;box-shadow:inset 0 0 0 0.700px #edf2f8"></div>
<div style="left:109.8px;top:216.7px;width:26.39999999999999px;height:14.300000000000011px;background:#dce6f1;box-shadow:inset 0 0 0 0.700px #edf2f8"></div>
<div style="left:137.2px;top:216.7px;width:26.600000000000023px;height:14.300000000000011px;background:#dce6f1;box-shadow:inset 0 0 0 0.700px #edf2f8"></div>
<span class="t" style="left:25.400000000000002px;text-align:left;top:220.35px;font-size:8.6px;color:#222;font-weight:normal;letter-spacing:-0.15px;">Bags</span>
<span class="t" style="left:-133.0px;width:240px;text-align:right;top:220.35px;font-size:8.6px;color:#222;font-weight:normal;letter-spacing:-0.15px;">58753</span>
<span class="t" style="left:-105.6px;width:240px;text-align:right;top:220.35px;font-size:8.6px;color:#222;font-weight:normal;letter-spacing:-0.15px;">26547</span>
<span class="t" style="left:-78.0px;width:240px;text-align:right;top:220.35px;font-size:8.6px;color:#222;font-weight:normal;letter-spacing:-0.15px;">42587</span>
<div style="left:22.8px;top:242.0px;width:142.0px;height:57.80000000000001px;background:#4a4a4a"></div>
<div style="left:23.3px;top:242.5px;width:141.0px;height:16.100000000000023px;background:#404040"></div>
<div style="left:81.0px;top:242.5px;width:1px;height:16.100000000000023px;background:#5a5a5a"></div>
<div style="left:108.8px;top:242.5px;width:1px;height:16.100000000000023px;background:#5a5a5a"></div>
<div style="left:136.2px;top:242.5px;width:1px;height:16.100000000000023px;background:#5a5a5a"></div>
<span class="t" style="left:-67.3px;width:240px;text-align:center;top:246.35px;font-size:10.6px;color:#fff;font-weight:bold;letter-spacing:0.55px;">CW 21</span>
<span class="t" style="left:-24.6px;width:240px;text-align:center;top:247.3px;font-size:8.7px;color:#fff;font-weight:bold;">B-01</span>
<span class="t" style="left:3.0px;width:240px;text-align:center;top:247.3px;font-size:8.7px;color:#fff;font-weight:bold;">B-02</span>
<span class="t" style="left:30.5px;width:240px;text-align:center;top:247.3px;font-size:8.7px;color:#fff;font-weight:bold;">B-03</span>
<div style="left:23.8px;top:259.1px;width:57.2px;height:12.799999999999955px;background:#dce6f1;box-shadow:inset 0 0 0 0.700px #edf2f8"></div>
<div style="left:82.0px;top:259.1px;width:26.799999999999997px;height:12.799999999999955px;background:#dce6f1;box-shadow:inset 0 0 0 0.700px #edf2f8"></div>
<div style="left:109.8px;top:259.1px;width:26.39999999999999px;height:12.799999999999955px;background:#dce6f1;box-shadow:inset 0 0 0 0.700px #edf2f8"></div>
<div style="left:137.2px;top:259.1px;width:26.600000000000023px;height:12.799999999999955px;background:#dce6f1;box-shadow:inset 0 0 0 0.700px #edf2f8"></div>
<span class="t" style="left:25.400000000000002px;text-align:left;top:262.0px;font-size:8.6px;color:#222;font-weight:normal;letter-spacing:-0.15px;">T-shirts</span>
<span class="t" style="left:-133.0px;width:240px;text-align:right;top:262.0px;font-size:8.6px;color:#222;font-weight:normal;letter-spacing:-0.15px;">25486</span>
<span class="t" style="left:-105.6px;width:240px;text-align:right;top:262.0px;font-size:8.6px;color:#222;font-weight:normal;letter-spacing:-0.15px;">29654</span>
<span class="t" style="left:-78.0px;width:240px;text-align:right;top:262.0px;font-size:8.6px;color:#222;font-weight:normal;letter-spacing:-0.15px;">29254</span>
<div style="left:23.8px;top:272.9px;width:57.2px;height:12.200000000000045px;background:#dce6f1;box-shadow:inset 0 0 0 0.700px #edf2f8"></div>
<div style="left:82.0px;top:272.9px;width:26.799999999999997px;height:12.200000000000045px;background:#dce6f1;box-shadow:inset 0 0 0 0.700px #edf2f8"></div>
<div style="left:109.8px;top:272.9px;width:26.39999999999999px;height:12.200000000000045px;background:#dce6f1;box-shadow:inset 0 0 0 0.700px #edf2f8"></div>
<div style="left:137.2px;top:272.9px;width:26.600000000000023px;height:12.200000000000045px;background:#dce6f1;box-shadow:inset 0 0 0 0.700px #edf2f8"></div>
<span class="t" style="left:25.400000000000002px;text-align:left;top:275.5px;font-size:8.6px;color:#222;font-weight:normal;letter-spacing:-0.15px;">Shoes</span>
<span class="t" style="left:-133.0px;width:240px;text-align:right;top:275.5px;font-size:8.6px;color:#222;font-weight:normal;letter-spacing:-0.15px;">75312</span>
<span class="t" style="left:-105.6px;width:240px;text-align:right;top:275.5px;font-size:8.6px;color:#222;font-weight:normal;letter-spacing:-0.15px;">59852</span>
<span class="t" style="left:-78.0px;width:240px;text-align:right;top:275.5px;font-size:8.6px;color:#222;font-weight:normal;letter-spacing:-0.15px;">99582</span>
<div style="left:23.8px;top:286.1px;width:57.2px;height:12.699999999999989px;background:#dce6f1;box-shadow:inset 0 0 0 0.700px #edf2f8"></div>
<div style="left:82.0px;top:286.1px;width:26.799999999999997px;height:12.699999999999989px;background:#dce6f1;box-shadow:inset 0 0 0 0.700px #edf2f8"></div>
<div style="left:109.8px;top:286.1px;width:26.39999999999999px;height:12.699999999999989px;background:#dce6f1;box-shadow:inset 0 0 0 0.700px #edf2f8"></div>
<div style="left:137.2px;top:286.1px;width:26.600000000000023px;height:12.699999999999989px;background:#dce6f1;box-shadow:inset 0 0 0 0.700px #edf2f8"></div>
<span class="t" style="left:25.400000000000002px;text-align:left;top:288.95px;font-size:8.6px;color:#222;font-weight:normal;letter-spacing:-0.15px;">Bags</span>
<span class="t" style="left:-133.0px;width:240px;text-align:right;top:288.95px;font-size:8.6px;color:#222;font-weight:normal;letter-spacing:-0.15px;">25482</span>
<span class="t" style="left:-105.6px;width:240px;text-align:right;top:288.95px;font-size:8.6px;color:#222;font-weight:normal;letter-spacing:-0.15px;">47521</span>
<span class="t" style="left:-78.0px;width:240px;text-align:right;top:288.95px;font-size:8.6px;color:#222;font-weight:normal;letter-spacing:-0.15px;">23654</span>
<div style="left:22.8px;top:309.9px;width:142.0px;height:58.0px;background:#4a4a4a"></div>
<div style="left:23.3px;top:310.4px;width:141.0px;height:16.100000000000023px;background:#404040"></div>
<div style="left:81.0px;top:310.4px;width:1px;height:16.100000000000023px;background:#5a5a5a"></div>
<div style="left:108.8px;top:310.4px;width:1px;height:16.100000000000023px;background:#5a5a5a"></div>
<div style="left:136.2px;top:310.4px;width:1px;height:16.100000000000023px;background:#5a5a5a"></div>
<span class="t" style="left:-67.3px;width:240px;text-align:center;top:314.25px;font-size:10.6px;color:#fff;font-weight:bold;letter-spacing:0.55px;">CW 22</span>
<span class="t" style="left:-24.6px;width:240px;text-align:center;top:315.2px;font-size:8.7px;color:#fff;font-weight:bold;">B-01</span>
<span class="t" style="left:3.0px;width:240px;text-align:center;top:315.2px;font-size:8.7px;color:#fff;font-weight:bold;">B-02</span>
<span class="t" style="left:30.5px;width:240px;text-align:center;top:315.2px;font-size:8.7px;color:#fff;font-weight:bold;">B-03</span>
<div style="left:23.8px;top:327.0px;width:57.2px;height:12.699999999999989px;background:#dce6f1;box-shadow:inset 0 0 0 0.700px #edf2f8"></div>
<div style="left:82.0px;top:327.0px;width:26.799999999999997px;height:12.699999999999989px;background:#dce6f1;box-shadow:inset 0 0 0 0.700px #edf2f8"></div>
<div style="left:109.8px;top:327.0px;width:26.39999999999999px;height:12.699999999999989px;background:#dce6f1;box-shadow:inset 0 0 0 0.700px #edf2f8"></div>
<div style="left:137.2px;top:327.0px;width:26.600000000000023px;height:12.699999999999989px;background:#dce6f1;box-shadow:inset 0 0 0 0.700px #edf2f8"></div>
<span class="t" style="left:25.400000000000002px;text-align:left;top:329.85px;font-size:8.6px;color:#222;font-weight:normal;letter-spacing:-0.15px;">T-shirts</span>
<span class="t" style="left:-133.0px;width:240px;text-align:right;top:329.85px;font-size:8.6px;color:#222;font-weight:normal;letter-spacing:-0.15px;">36965</span>
<span class="t" style="left:-105.6px;width:240px;text-align:right;top:329.85px;font-size:8.6px;color:#222;font-weight:normal;letter-spacing:-0.15px;">42158</span>
<span class="t" style="left:-78.0px;width:240px;text-align:right;top:329.85px;font-size:8.6px;color:#222;font-weight:normal;letter-spacing:-0.15px;">25254</span>
<div style="left:23.8px;top:340.7px;width:57.2px;height:12.600000000000023px;background:#dce6f1;box-shadow:inset 0 0 0 0.700px #edf2f8"></div>
<div style="left:82.0px;top:340.7px;width:26.799999999999997px;height:12.600000000000023px;background:#dce6f1;box-shadow:inset 0 0 0 0.700px #edf2f8"></div>
<div style="left:109.8px;top:340.7px;width:26.39999999999999px;height:12.600000000000023px;background:#dce6f1;box-shadow:inset 0 0 0 0.700px #edf2f8"></div>
<div style="left:137.2px;top:340.7px;width:26.600000000000023px;height:12.600000000000023px;background:#dce6f1;box-shadow:inset 0 0 0 0.700px #edf2f8"></div>
<span class="t" style="left:25.400000000000002px;text-align:left;top:343.5px;font-size:8.6px;color:#222;font-weight:normal;letter-spacing:-0.15px;">Shoes</span>
<span class="t" style="left:-133.0px;width:240px;text-align:right;top:343.5px;font-size:8.6px;color:#222;font-weight:normal;letter-spacing:-0.15px;">48583</span>
<span class="t" style="left:-105.6px;width:240px;text-align:right;top:343.5px;font-size:8.6px;color:#222;font-weight:normal;letter-spacing:-0.15px;">62421</span>
<span class="t" style="left:-78.0px;width:240px;text-align:right;top:343.5px;font-size:8.6px;color:#222;font-weight:normal;letter-spacing:-0.15px;">50236</span>
<div style="left:23.8px;top:354.3px;width:57.2px;height:12.599999999999966px;background:#dce6f1;box-shadow:inset 0 0 0 0.700px #edf2f8"></div>
<div style="left:82.0px;top:354.3px;width:26.799999999999997px;height:12.599999999999966px;background:#dce6f1;box-shadow:inset 0 0 0 0.700px #edf2f8"></div>
<div style="left:109.8px;top:354.3px;width:26.39999999999999px;height:12.599999999999966px;background:#dce6f1;box-shadow:inset 0 0 0 0.700px #edf2f8"></div>
<div style="left:137.2px;top:354.3px;width:26.600000000000023px;height:12.599999999999966px;background:#dce6f1;box-shadow:inset 0 0 0 0.700px #edf2f8"></div>
<span class="t" style="left:25.400000000000002px;text-align:left;top:357.1px;font-size:8.6px;color:#222;font-weight:normal;letter-spacing:-0.15px;">Bags</span>
<span class="t" style="left:-133.0px;width:240px;text-align:right;top:357.1px;font-size:8.6px;color:#222;font-weight:normal;letter-spacing:-0.15px;">89547</span>
<span class="t" style="left:-105.6px;width:240px;text-align:right;top:357.1px;font-size:8.6px;color:#222;font-weight:normal;letter-spacing:-0.15px;">75312</span>
<span class="t" style="left:-78.0px;width:240px;text-align:right;top:357.1px;font-size:8.6px;color:#222;font-weight:normal;letter-spacing:-0.15px;">59852</span>
<div style="left:22.8px;top:377.9px;width:142.0px;height:57.900000000000034px;background:#4a4a4a"></div>
<div style="left:23.3px;top:378.4px;width:141.0px;height:16.0px;background:#404040"></div>
<div style="left:81.0px;top:378.4px;width:1px;height:16.0px;background:#5a5a5a"></div>
<div style="left:108.8px;top:378.4px;width:1px;height:16.0px;background:#5a5a5a"></div>
<div style="left:136.2px;top:378.4px;width:1px;height:16.0px;background:#5a5a5a"></div>
<span class="t" style="left:-67.3px;width:240px;text-align:center;top:382.2px;font-size:10.6px;color:#fff;font-weight:bold;letter-spacing:0.55px;">CW 23</span>
<span class="t" style="left:-24.6px;width:240px;text-align:center;top:383.15px;font-size:8.7px;color:#fff;font-weight:bold;">B-01</span>
<span class="t" style="left:3.0px;width:240px;text-align:center;top:383.15px;font-size:8.7px;color:#fff;font-weight:bold;">B-02</span>
<span class="t" style="left:30.5px;width:240px;text-align:center;top:383.15px;font-size:8.7px;color:#fff;font-weight:bold;">B-03</span>
<div style="left:23.8px;top:394.9px;width:57.2px;height:12.800000000000011px;background:#dce6f1;box-shadow:inset 0 0 0 0.700px #edf2f8"></div>
<div style="left:82.0px;top:394.9px;width:26.799999999999997px;height:12.800000000000011px;background:#dce6f1;box-shadow:inset 0 0 0 0.700px #edf2f8"></div>
<div style="left:109.8px;top:394.9px;width:26.39999999999999px;height:12.800000000000011px;background:#dce6f1;box-shadow:inset 0 0 0 0.700px #edf2f8"></div>
<div style="left:137.2px;top:394.9px;width:26.600000000000023px;height:12.800000000000011px;background:#dce6f1;box-shadow:inset 0 0 0 0.700px #edf2f8"></div>
<span class="t" style="left:25.400000000000002px;text-align:left;top:397.8px;font-size:8.6px;color:#222;font-weight:normal;letter-spacing:-0.15px;">T-shirts</span>
<span class="t" style="left:-133.0px;width:240px;text-align:right;top:397.8px;font-size:8.6px;color:#222;font-weight:normal;letter-spacing:-0.15px;">58426</span>
<span class="t" style="left:-105.6px;width:240px;text-align:right;top:397.8px;font-size:8.6px;color:#222;font-weight:normal;letter-spacing:-0.15px;">44785</span>
<span class="t" style="left:-78.0px;width:240px;text-align:right;top:397.8px;font-size:8.6px;color:#222;font-weight:normal;letter-spacing:-0.15px;">63258</span>
<div style="left:23.8px;top:408.7px;width:57.2px;height:12.5px;background:#dce6f1;box-shadow:inset 0 0 0 0.700px #edf2f8"></div>
<div style="left:82.0px;top:408.7px;width:26.799999999999997px;height:12.5px;background:#dce6f1;box-shadow:inset 0 0 0 0.700px #edf2f8"></div>
<div style="left:109.8px;top:408.7px;width:26.39999999999999px;height:12.5px;background:#dce6f1;box-shadow:inset 0 0 0 0.700px #edf2f8"></div>
<div style="left:137.2px;top:408.7px;width:26.600000000000023px;height:12.5px;background:#dce6f1;box-shadow:inset 0 0 0 0.700px #edf2f8"></div>
<span class="t" style="left:25.400000000000002px;text-align:left;top:411.45px;font-size:8.6px;color:#222;font-weight:normal;letter-spacing:-0.15px;">Shoes</span>
<span class="t" style="left:-133.0px;width:240px;text-align:right;top:411.45px;font-size:8.6px;color:#222;font-weight:normal;letter-spacing:-0.15px;">48752</span>
<span class="t" style="left:-105.6px;width:240px;text-align:right;top:411.45px;font-size:8.6px;color:#222;font-weight:normal;letter-spacing:-0.15px;">46832</span>
<span class="t" style="left:-78.0px;width:240px;text-align:right;top:411.45px;font-size:8.6px;color:#222;font-weight:normal;letter-spacing:-0.15px;">95254</span>
<div style="left:23.8px;top:422.2px;width:57.2px;height:12.600000000000023px;background:#dce6f1;box-shadow:inset 0 0 0 0.700px #edf2f8"></div>
<div style="left:82.0px;top:422.2px;width:26.799999999999997px;height:12.600000000000023px;background:#dce6f1;box-shadow:inset 0 0 0 0.700px #edf2f8"></div>
<div style="left:109.8px;top:422.2px;width:26.39999999999999px;height:12.600000000000023px;background:#dce6f1;box-shadow:inset 0 0 0 0.700px #edf2f8"></div>
<div style="left:137.2px;top:422.2px;width:26.600000000000023px;height:12.600000000000023px;background:#dce6f1;box-shadow:inset 0 0 0 0.700px #edf2f8"></div>
<span class="t" style="left:25.400000000000002px;text-align:left;top:425.0px;font-size:8.6px;color:#222;font-weight:normal;letter-spacing:-0.15px;">Bags</span>
<span class="t" style="left:-133.0px;width:240px;text-align:right;top:425.0px;font-size:8.6px;color:#222;font-weight:normal;letter-spacing:-0.15px;">58432</span>
<span class="t" style="left:-105.6px;width:240px;text-align:right;top:425.0px;font-size:8.6px;color:#222;font-weight:normal;letter-spacing:-0.15px;">95424</span>
<span class="t" style="left:-78.0px;width:240px;text-align:right;top:425.0px;font-size:8.6px;color:#222;font-weight:normal;letter-spacing:-0.15px;">45715</span>
<svg style="left:178px;top:133px" width="557" height="307" viewBox="178 133 557 307">
<defs>
<linearGradient id="gy" gradientUnits="userSpaceOnUse" x1="0" y1="228" x2="0" y2="407.5">
 <stop offset="0" stop-color="#fbd414"/><stop offset="0.180" stop-color="#dea410"/><stop offset="0.400" stop-color="#b8800e"/><stop offset="0.620" stop-color="#94600e"/><stop offset="0.850" stop-color="#6a420f"/><stop offset="1" stop-color="#4c2c0e"/>
</linearGradient>
<linearGradient id="gg" gradientUnits="userSpaceOnUse" x1="0" y1="307.500" x2="0" y2="407.5">
 <stop offset="0" stop-color="#a4f43c"/><stop offset="0.220" stop-color="#6ede50"/><stop offset="0.450" stop-color="#44bc6a"/><stop offset="0.700" stop-color="#2a9484"/><stop offset="1" stop-color="#1f6a94"/>
</linearGradient>
<linearGradient id="gp" gradientUnits="userSpaceOnUse" x1="0" y1="253.500" x2="0" y2="407.5">
 <stop offset="0" stop-color="#fa3092"/><stop offset="0.200" stop-color="#d62a8a"/><stop offset="0.370" stop-color="#b02888"/><stop offset="0.520" stop-color="#902682"/><stop offset="0.680" stop-color="#702476"/><stop offset="0.850" stop-color="#4c2064"/><stop offset="1" stop-color="#341a52"/>
</linearGradient>
<linearGradient id="gc" gradientUnits="userSpaceOnUse" x1="0" y1="200" x2="0" y2="407.5">
 <stop offset="0" stop-color="#2ae2fa"/><stop offset="0.200" stop-color="#20bada"/><stop offset="0.400" stop-color="#1a9abc"/><stop offset="0.600" stop-color="#167ea2"/><stop offset="0.800" stop-color="#126084"/><stop offset="1" stop-color="#0e4668"/>
</linearGradient>
<linearGradient id="oyg" gradientUnits="userSpaceOnUse" x1="0" y1="344" x2="0" y2="407.5">
 <stop offset="0" stop-color="#b4a040"/><stop offset="0.450" stop-color="#8e8c66"/><stop offset="1" stop-color="#687a8a"/>
</linearGradient>
<linearGradient id="ogp" gradientUnits="userSpaceOnUse" x1="0" y1="347" x2="0" y2="407.5">
 <stop offset="0" stop-color="#9074a0"/><stop offset="0.450" stop-color="#6468b0"/><stop offset="1" stop-color="#3a58b6"/>
</linearGradient>
<linearGradient id="opc" gradientUnits="userSpaceOnUse" x1="0" y1="320" x2="0" y2="407.5">
 <stop offset="0" stop-color="#5e84ca"/><stop offset="0.500" stop-color="#4a6aba"/><stop offset="1" stop-color="#38569e"/>
</linearGradient>
<linearGradient id="gl" gradientUnits="userSpaceOnUse" x1="0" y1="200" x2="0" y2="407.5">
 <stop offset="0" stop-color="#0c0c0c"/><stop offset="0.400" stop-color="#1c1c1c"/><stop offset="0.700" stop-color="#363636"/><stop offset="1" stop-color="#4a4a4a"/>
</linearGradient>
<clipPath id="tri"><path d="M233 407.500L303.500 228 374 407.500zM304 407.500L375 307.500 445.500 407.500zM375 407.500L445.500 253.500 516 407.500zM446 407.500L516.300 200 586.500 407.500z" clip-rule="nonzero"/></clipPath>
<linearGradient id="lg" x1="0" y1="0" x2="0" y2="1"><stop offset="0" stop-color="#8cf03c"/><stop offset="1" stop-color="#2a7f9c"/></linearGradient>
<linearGradient id="lp" x1="0" y1="0" x2="0" y2="1"><stop offset="0" stop-color="#f0308c"/><stop offset="1" stop-color="#5a2a86"/></linearGradient>
<linearGradient id="lc" x1="0" y1="0" x2="0" y2="1"><stop offset="0" stop-color="#28d8f4"/><stop offset="1" stop-color="#16689a"/></linearGradient>
<linearGradient id="ly" x1="0" y1="0" x2="0" y2="1"><stop offset="0" stop-color="#ffd21a"/><stop offset="1" stop-color="#b06a0c"/></linearGradient>
</defs>
<rect x="178" y="133" width="557" height="307" fill="#000"/>
<g stroke="#565656" stroke-width="1.300">
<path d="M198 193.150H622.400M198 236.150H622.400M198 279.050H622.400M198 322.050H622.400M198 364.950H622.400M198 407.500H622.400"/>
</g>
<path d="M622.400 192.200V408.100" stroke="#8a8a8a" stroke-width="1.100"/>
<g stroke="#8a8a8a" stroke-width="1.100"><path d="M622.400 193.150h5M622.400 236.150h5M622.400 279.050h5M622.400 322.050h5M622.400 364.950h5M622.400 407.500h5"/></g>
<polygon points="233,407.500 303.500,228 374,407.500" fill="url(#gy)"/>
<polygon points="304,407.500 375,307.500 445.500,407.500" fill="url(#gg)"/>
<polygon points="375,407.500 445.500,253.500 516,407.500" fill="url(#gp)"/>
<polygon points="446,407.500 516.300,200 586.500,407.500" fill="url(#gc)"/>
<polygon points="304,407.500 349,344 374,407.500" fill="url(#oyg)"/>
<polygon points="375,407.500 402.800,347 445.500,407.500" fill="url(#ogp)"/>
<polygon points="446,407.500 475.800,319.700 516,407.500" fill="url(#opc)"/>
<g clip-path="url(#tri)" style="mix-blend-mode:screen"><g stroke="url(#gl)" stroke-width="1.300" fill="none">
<path d="M198 236.150H622.400V236M198 279.050H622.400V279M198 322.050H622.400V322M198 364.950H622.400V365M198 407.500H622.400V408"/></g></g>
<text x="451" y="165.500" text-anchor="middle" font-family="'Liberation Sans',sans-serif" font-weight="bold" font-size="18.800" fill="#fff" stroke="#fff" stroke-width="0.400">Sales of all branches</text>
<g font-family="'Liberation Sans',sans-serif" font-size="16" fill="#e6e6e6">
<text x="634" y="201.600" textLength="60.400" lengthAdjust="spacingAndGlyphs">2500000</text>
<text x="634" y="244.600" textLength="60.400" lengthAdjust="spacingAndGlyphs">2000000</text>
<text x="634" y="287.500" textLength="60.400" lengthAdjust="spacingAndGlyphs">1500000</text>
<text x="634" y="330.500" textLength="60.400" lengthAdjust="spacingAndGlyphs">1000000</text>
<text x="634" y="373.400" textLength="51.700" lengthAdjust="spacingAndGlyphs">500000</text>
<text x="634" y="416.200" textLength="8.600" lengthAdjust="spacingAndGlyphs">0</text>
</g>
<g font-family="'Liberation Sans',sans-serif" font-size="8.800" fill="#e2e2e2">
<rect x="336.300" y="424.700" width="6.200" height="6" fill="url(#lg)"/><text x="343.500" y="430.800">cw 21</text>
<rect x="399.700" y="424.700" width="6.200" height="6" fill="url(#lp)"/><text x="406.900" y="430.800">cw 22</text>
<rect x="463.200" y="424.700" width="6.200" height="6" fill="url(#lc)"/><text x="470.400" y="430.800">cw 23</text>
<rect x="526.200" y="424.700" width="6.200" height="6" fill="url(#ly)"/><text x="533.400" y="430.800">cw 20</text>
</g>
</svg>

<div style="left:0px;top:440px;width:750px;height:12.5px;background:#f1f1f1"></div>
<div style="left:0px;top:440px;width:735px;height:0.8px;background:#fff"></div>
<div style="left:0px;top:452px;width:750px;height:0.8px;background:#dcdcdc"></div>
<div style="left:0px;top:452.8px;width:750px;height:16.2px;background:#f0f0f0"></div>
<div style="left:51.3px;top:440.5px;width:33.7px;height:10.7px;background:#fdfdfd;border-left:0.700px solid #d0d0d0;border-right:0.700px solid #d0d0d0;border-bottom:1.300px solid #5fa14c;box-sizing:border-box"></div>
<span class="t" style="left:-52.1px;width:240px;text-align:center;top:443.5px;font-size:6.4px;color:#111;font-weight:bold;">Overview</span>
<span class="t" style="left:-16.0px;width:240px;text-align:center;top:443.55px;font-size:6.3px;color:#333;font-weight:normal;">Branch 01</span>
<span class="t" style="left:21.0px;width:240px;text-align:center;top:443.55px;font-size:6.3px;color:#333;font-weight:normal;">Branch 02</span>
<span class="t" style="left:58.1px;width:240px;text-align:center;top:443.55px;font-size:6.3px;color:#333;font-weight:normal;">Branch 03</span>
<div style="left:122.3px;top:442px;width:0.8px;height:8.5px;background:#c4c4c4"></div>
<div style="left:159.5px;top:442px;width:0.8px;height:8.5px;background:#c4c4c4"></div>
<div style="left:196.5px;top:442px;width:0.8px;height:8.5px;background:#c4c4c4"></div>
<span class="t" style="left:85.3px;width:240px;text-align:center;top:442.1px;font-size:9px;color:#444;font-weight:normal;">+</span>
<svg style="left:2px;top:442px;" width="46" height="8" viewBox="0 0 46 8"><g fill="#c6c6c6" stroke="#c6c6c6" stroke-width="0.500"><path d="M5.300 2.200L3 4l2.300 1.800zM2.200 2v4M5.300 3.700h2v0.600h-2z"/><path d="M16.800 2.200l-2.300 1.800 2.300 1.800zM16.800 3.700h2v0.600h-2z"/><path d="M29 2.200l2.300 1.800-2.300 1.800zM27 3.700h2v0.600h-2z"/><path d="M40.500 2.200l2.300 1.800-2.300 1.800zM43.600 2v4M38.500 3.700h2v0.600h-2z"/></g></svg>
<div style="left:366.5px;top:441px;width:0.8px;height:11px;background:#c8c8c8"></div>
<div style="left:367.3px;top:441px;width:368px;height:11px;background:#f6f6f6"></div>
<div style="left:378.5px;top:445.3px;width:141.5px;height:3.4px;background:#808080;border-radius:1.700px"></div>
<svg style="left:371px;top:443px;" width="6" height="8" viewBox="0 0 6 8"><path d="M4.500 2L2 4l2.500 2z" fill="#666"/></svg>
<svg style="left:726px;top:443px;" width="6" height="8" viewBox="0 0 6 8"><path d="M2 2L4.500 4l-2.500 2z" fill="#666"/></svg>
<svg style="left:736.5px;top:443.5px;" width="8" height="8" viewBox="0 0 8 8"><path d="M1.500 0.300v7.400M0.300 1.700h7.400" stroke="#666" stroke-width="0.700" fill="none"/><path d="M3.200 3.400l3.400 3.400M3.200 3.400h2.300M3.200 3.400v2.300" stroke="#555" stroke-width="0.700" fill="none"/></svg>
<div style="left:735px;top:132px;width:15px;height:311.5px;background:#f1f1f1"></div>
<div style="left:735px;top:132px;width:1.2px;height:308.8px;background:#fff"></div>
<div style="left:744.5px;top:121px;width:0.8px;height:330px;background:#dedede"></div>
<div style="left:745.3px;top:121px;width:5px;height:330px;background:#f4f4f4"></div>
<div style="left:738px;top:132px;width:3.4px;height:94px;background:#808080;border-radius:1.700px"></div>
<div style="left:745.3px;top:275px;width:6px;height:24px;background:#fdfdfd;border:1px solid #9a9a9a;border-radius:2px;box-sizing:border-box"></div>
<svg style="left:746px;top:284px;" width="4" height="6" viewBox="0 0 4 6"><path d="M3 0.800L0.800 3 3 5.200" fill="none" stroke="#555" stroke-width="0.800"/></svg>
<svg style="left:736px;top:124px;" width="8" height="6" viewBox="0 0 8 6"><path d="M1.500 4.500L4 1.500l2.500 3z" fill="#666"/></svg>
<svg style="left:736px;top:410px;" width="8" height="6" viewBox="0 0 8 6"><path d="M1.500 1.500L4 4.500l2.500-3z" fill="#666"/></svg>
<svg style="left:737px;top:419px;" width="6" height="24" viewBox="0 0 6 24"><path d="M1.600 3.400L3 1.700l1.400 1.700zM1.600 4.400L3 6.100l1.400-1.700z" fill="#666"/><circle cx="2.900" cy="12.200" r="1.450" fill="#d81e1e"/><path d="M1.600 20L3 18.300l1.400 1.700zM1.600 21L3 22.700l1.400-1.700z" fill="#666"/></svg>
<div style="left:338px;top:455px;width:0.8px;height:12px;background:#d0d0d0"></div>
<div style="left:594px;top:455px;width:0.8px;height:12px;background:#d0d0d0"></div>
<svg style="left:553px;top:455px;" width="12" height="11" viewBox="0 0 12 11"><path d="M2 5.500a4 4 0 0 1 7-2.300M10 5.500a4 4 0 0 1-7 2.300" fill="none" stroke="#c4c4c4" stroke-width="0.900"/><path d="M9.600 1.500v2h-2M2.400 9.500v-2h2" fill="none" stroke="#c4c4c4" stroke-width="0.900"/></svg>
<span class="t" style="left:459.3px;width:240px;text-align:center;top:457.85px;font-size:6.5px;color:#222;font-weight:normal;">Ins</span>
<span class="t" style="left:486.8px;width:240px;text-align:center;top:457.85px;font-size:6.5px;color:#222;font-weight:normal;">AUTO</span>
<span class="t" style="left:507.2px;width:240px;text-align:center;top:456.0px;font-size:8px;color:#666;font-weight:normal;">–</span>
<div style="left:633.5px;top:460px;width:64.5px;height:0.8px;background:#c9c9c9"></div>
<div style="left:662.3px;top:457.5px;width:5.4px;height:5.4px;background:#fff;border:0.800px solid #777;border-radius:50%;box-sizing:border-box"></div>
<span class="t" style="left:583.2px;width:240px;text-align:center;top:456.05px;font-size:8.5px;color:#666;font-weight:normal;">+</span>
<span class="t" style="left:604.0px;width:240px;text-align:center;top:457.95px;font-size:6.3px;color:#222;font-weight:normal;">100%</span>
<span class="t" style="left:619.8px;width:240px;text-align:center;top:454.05px;font-size:8.5px;color:#6e6e6e;font-weight:normal;">»</span>
</div></body></html>
